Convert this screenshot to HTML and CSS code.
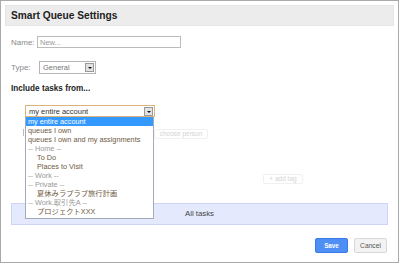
FILE: index.html
```html
<!DOCTYPE html>
<html lang="en">

<head>
    <link rel="stylesheet" href="styles.css">
</head>

<body>
    <div class="dialog" role="dialog" aria-labelledby="queue-title">
        <div class="dialog-header">
            <h3 id="queue-title">Smart Queue Settings</h3>
        </div>

        <div class="field field-name">
            <label for="queue-name">Name:</label>
            <input type="text" id="queue-name" value="New...">
        </div>

        <div class="field field-type">
            <label>Type:</label>
            <div class="select-box small">
                <span class="select-value">General</span>
                <span class="select-arrow"></span>
            </div>
        </div>

        <div class="section-title">Include tasks from...</div>

        <div class="source">
            <div class="select-box focused">
                <span class="select-value">my entire account</span>
                <span class="select-arrow"></span>
            </div>
            <span class="hidden-tick"></span>
            <!-- open dropdown lies over the rest of the form -->
            <ul class="select-list">
                <li class="selected">my entire account</li>
                <li>queues I own</li>
                <li>queues I own and my assignments</li>
                <li class="group">-- Home --</li>
                <li class="child">To Do</li>
                <li class="child">Places to Visit</li>
                <li class="group">-- Work --</li>
                <li class="group">-- Private --</li>
                <li class="child">夏休みラプラプ旅行計画</li>
                <li class="group">-- Work.取引先A --</li>
                <li class="child">プロジェクトXXX</li>
            </ul>
        </div>

        <div class="faded-row person-row">
            <button class="faded-btn">choose person</button>
        </div>

        <div class="faded-row tag-row">
            <button class="faded-btn">+ add tag</button>
        </div>

        <div class="all-tasks">All tasks</div>

        <div class="actions">
            <button class="btn btn-save">Save</button>
            <button class="btn btn-cancel">Cancel</button>
        </div>
    </div>
</body>

</html>
```

FILE: styles.css
```css
body {
    font-family: "Liberation Sans", Arial, "Noto Sans CJK JP", sans-serif;
    margin: 0;
    padding: 0;
    background-color: white;
}

.dialog {
    position: relative;
    box-sizing: border-box;
    width: 399px;
    height: 263px;
    border: 1px solid #aaa;
    padding: 4px;
}

.dialog-header {
    box-sizing: border-box;
    height: 21px;
    background-color: #ececec;
    border: 1px solid #e6e6e6;
    padding: 0 5px;
}

.dialog-header h3 {
    margin: 0;
    font-size: 10.2px;
    line-height: 20px;
    color: #222;
}

.field {
    display: flex;
    align-items: center;
    padding-left: 6px;
    font-size: 8px;
    color: #888;
}

.field-name {
    margin-top: 10px;
    height: 12px;
}

.field-name label {
    width: 26px;
}

.field-name input {
    box-sizing: border-box;
    width: 144px;
    height: 12px;
    border: 1px solid #bbb;
    padding: 0 2px;
    font-family: inherit;
    font-size: 7.5px;
    color: #999;
    outline: none;
}

.field-type {
    margin-top: 13px;
    height: 13px;
}

.field-type label {
    width: 28px;
}

.select-box {
    box-sizing: border-box;
    display: flex;
    align-items: center;
    justify-content: space-between;
    width: 130px;
    height: 12px;
    border: 1px solid #b5b5b5;
    padding: 0 1px 0 3px;
    background-color: white;
    font-size: 7.5px;
    color: #333;
}

.select-box.small {
    width: 57px;
    height: 13px;
    color: #777;
}

.select-box.focused {
    border-color: #dcb478;
}

.select-arrow {
    position: relative;
    box-sizing: border-box;
    width: 9px;
    height: 9px;
    border: 1px solid #999;
    background-color: #e2e2e2;
}

.select-arrow::after {
    content: "";
    position: absolute;
    left: 2px;
    top: 3px;
    border-left: 2px solid transparent;
    border-right: 2px solid transparent;
    border-top: 2px solid #111;
}

.section-title {
    margin-top: 9px;
    padding-left: 6px;
    font-size: 8.2px;
    line-height: 12px;
    font-weight: bold;
    color: #222;
}

.source {
    position: relative;
    margin-top: 10px;
    margin-left: 20px;
    width: 130px;
    height: 11px;
}

.source .select-box {
    height: 12px;
}

.hidden-tick {
    position: absolute;
    left: -2px;
    top: 24px;
    width: 1px;
    height: 7px;
    background-color: #bbb;
}

.select-list {
    position: absolute;
    top: 12px;
    left: 0;
    z-index: 10;
    box-sizing: border-box;
    width: 129px;
    margin: 0;
    padding: 0 0 2px;
    list-style: none;
    background-color: white;
    border: 1px solid #a3aab8;
    border-top: none;
}

.select-list li {
    height: 9px;
    line-height: 9px;
    padding-left: 2px;
    font-size: 7.3px;
    color: #6e5a44;
    white-space: nowrap;
}

.select-list li.selected {
    background-color: #3399ff;
    color: white;
}

.select-list li.group {
    color: #999;
}

.select-list li.child {
    padding-left: 11px;
    color: #6e5a44;
}

.faded-row {
    display: flex;
}

.person-row {
    margin-top: 13px;
    padding-left: 149px;
}

.tag-row {
    margin-top: 35px;
    padding-left: 258px;
}

.faded-btn {
    box-sizing: border-box;
    height: 10px;
    padding: 0;
    border: 1px solid #f0f0f0;
    border-radius: 2px;
    background-color: white;
    font-family: inherit;
    font-size: 6.5px;
    line-height: 8px;
    color: #d4d4d4;
    white-space: nowrap;
}

.person-row .faded-btn {
    width: 54px;
}

.tag-row .faded-btn {
    width: 40px;
}

.all-tasks {
    box-sizing: border-box;
    margin: 19px 6px 0;
    height: 22px;
    line-height: 20px;
    text-align: center;
    background-color: #e4e9fd;
    border: 1px solid #ccd5f5;
    font-size: 7.8px;
    color: #444;
}

.actions {
    display: flex;
    justify-content: flex-end;
    gap: 6px;
    margin-top: 13px;
    padding-right: 7px;
}

.btn {
    box-sizing: border-box;
    width: 33px;
    height: 15px;
    padding: 0;
    border-radius: 2px;
    font-family: inherit;
    font-size: 6.3px;
    cursor: pointer;
}

.btn-save {
    background-color: #4d8ff5;
    border: 1px solid #3a7ae6;
    color: white;
    font-weight: bold;
}

.btn-cancel {
    background-color: #f3f3f3;
    border: 1px solid #d8d8d8;
    color: #555;
    font-size: 6.7px;
}
```
